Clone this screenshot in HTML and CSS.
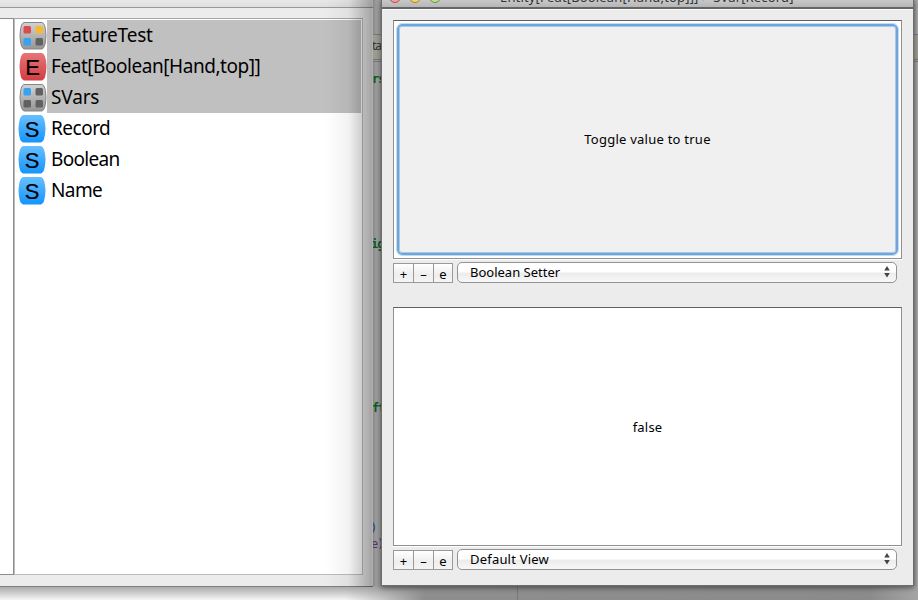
FILE: index.html
```html
<!DOCTYPE html>
<html lang="en">
<head>
<meta charset="utf-8">
<title>Entity Browser</title>
<link rel="stylesheet" href="styles.css">
</head>
<body>
<div class="desktop">
  <div class="editor">
    <span class="code tab">ta</span>
    <span class="code c1">rs</span>
    <span class="code c2">ig</span>
    <span class="code c3">ft</span>
    <span class="code c4">)</span>
    <span class="code c5">e)</span>
  </div>
  <div class="below"></div>
  <section class="window browser">
    <div class="toolbar"></div>
    <div class="panes">
      <div class="side"></div>
      <ul class="list">
        <li class="selected"><svg class="icon" viewBox="0 0 28 29"><use href="#package"/><rect x="4.500" y="5" width="7.500" height="7.500" rx="1.500" fill="#d94b50"/><rect x="16.500" y="5" width="7.500" height="7.500" rx="1.500" fill="#f7b932"/><rect x="4.500" y="17" width="7.500" height="7.500" rx="1.500" fill="#36a2f2"/><rect x="16.500" y="17" width="7.500" height="7.500" rx="1.500" fill="#616161"/></svg><span class="t1">FeatureTest</span></li>
        <li class="selected"><svg class="icon" viewBox="0 0 28 29"><path d="M5 1H23Q27 2 27.500 14.500Q27 28 23 28.500H5Q1 28 .5 14.500Q1 2 5 1Z" fill="url(#red)"/><text x="13.500" y="22.500" class="letter">E</text></svg><span class="t2">Feat[Boolean[Hand,top]]</span></li>
        <li class="selected"><svg class="icon" viewBox="0 0 28 29"><use href="#package"/><rect x="4.500" y="5" width="7.500" height="7.500" rx="1.500" fill="#36a2f2"/><g fill="#616161"><rect x="16.500" y="5" width="7.500" height="7.500" rx="1.500"/><rect x="4.500" y="17" width="7.500" height="7.500" rx="1.500"/><rect x="16.500" y="17" width="7.500" height="7.500" rx="1.500"/></g></svg><span class="t3">SVars</span></li>
        <li><svg class="icon sort" viewBox="0 0 28 29"><use href="#sort"/><text x="14" y="22.500" class="letter">S</text></svg><span class="t4">Record</span></li>
        <li><svg class="icon sort" viewBox="0 0 28 29"><use href="#sort"/><text x="14" y="22.500" class="letter">S</text></svg><span class="t5">Boolean</span></li>
        <li><svg class="icon sort" viewBox="0 0 28 29"><use href="#sort"/><text x="14" y="22.500" class="letter">S</text></svg><span class="t6">Name</span></li>
      </ul>
    </div>
    <div class="shade"></div>
  </section>
  <section class="window inspector">
    <header class="titlebar">
      <i class="light red"></i><i class="light yellow"></i><i class="light green"></i>
      <span class="title">Entity[Feat[Boolean[Hand,top]]] &gt; SVar[Record]</span>
    </header>
    <main class="views">
      <div class="view"><button class="toggle"><span>Toggle value to true</span></button></div>
      <div class="controls">
        <button class="small">+</button><button class="small">–</button><button class="small">e</button>
        <div class="select"><span class="s1">Boolean Setter</span><svg class="arrows" viewBox="0 0 6 12"><path d="M3 0L5.800 4.500H.2ZM3 11.500L.2 7H5.800Z" fill="#444"/></svg></div>
      </div>
      <div class="view second"><span>false</span></div>
      <div class="controls">
        <button class="small">+</button><button class="small">–</button><button class="small">e</button>
        <div class="select"><span class="s2">Default View</span><svg class="arrows" viewBox="0 0 6 12"><path d="M3 0L5.800 4.500H.2ZM3 11.500L.2 7H5.800Z" fill="#444"/></svg></div>
      </div>
    </main>
  </section>
</div>
<svg width="0" height="0" class="defs">
  <defs>
    <linearGradient id="grey" x2="0" y2="1"><stop stop-color="#d2d2d2"/><stop offset="1" stop-color="#969696"/></linearGradient>
    <linearGradient id="red" x2="0" y2="1"><stop stop-color="#e77577"/><stop offset="1" stop-color="#d33d42"/></linearGradient>
    <linearGradient id="blue" x2="0" y2="1"><stop stop-color="#69bfff"/><stop offset="1" stop-color="#1495fc"/></linearGradient>
    <g id="package"><path d="M5 1.500H23Q26.500 2 27 14.500Q26.500 27 23 28H5Q1.500 27 1 14.500Q1.500 2 5 1.500Z" fill="url(#grey)" stroke="#858585"/></g>
    <g id="sort"><path d="M5 1H23Q27 2 27.500 14.500Q27 28 23 28.500H5Q1 28 .5 14.500Q1 2 5 1Z" fill="url(#blue)"/></g>
  </defs>
</svg>
</body>
</html>
```
FILE: styles.css
```css
* { box-sizing: border-box; }
body { margin: 0; font-family: "Noto Sans", "Open Sans", sans-serif; color: #000; }
.defs { position: absolute; }
.desktop { position: relative; width: 918px; height: 600px; overflow: hidden; background: #fff; }

.editor {
  position: absolute; z-index: 0; inset: 0 0 14px 373px;
  background: linear-gradient(90deg, #858585, #9c9c9c 3px, #999 7px, #858585 9px, #8c8c8c 540px, #aaa 545px);
}
.editor::before { content: ""; position: absolute; inset: 34px 0 auto 0; height: 24px; background: #9c9b92; border: solid #777; border-width: 1px 0; }
.editor::after { content: ""; position: absolute; inset: 61px 0 auto 0; height: 1px; background: #777; }
.code { position: absolute; left: 0; z-index: 1; font: bold 12px/14px "DejaVu Sans Mono", monospace; color: #075b22; letter-spacing: -1px; }
.tab { top: 39px; left: -1px; font: 12px/14px "Noto Sans", sans-serif; color: #333; }
.c1 { top: 72px; left: -1px; }
.c2 { top: 237px; left: -2px; }
.c3 { top: 401px; left: -1px; }
.c4 { top: 521px; left: -3px; color: #173a80; font-weight: normal; }
.c5 { top: 537px; left: -2px; color: #563070; font-weight: normal; }
.below {
  position: absolute; left: 0; right: 0; top: 586px; height: 14px;
  background:
    linear-gradient(90deg, transparent 517px, #777 517px, #777 518px, transparent 518px),
    linear-gradient(90deg, transparent 345px, rgba(142,142,142,.35) 375px, #8e8e8e 425px, #8b8b8b 870px, #a4a4a4 918px),
    linear-gradient(#a6a6a6, #f5f5f5);
}

.window { position: absolute; display: flex; flex-direction: column; background: #ececec; }
.browser { z-index: 1; left: 0; top: 0; width: 373px; height: 587px; border-bottom: 1px solid #808080; padding-bottom: 11px; }
.toolbar { height: 8px; flex: none; background: linear-gradient(#e8e8e8, #dedede); border-bottom: 1px solid #999; margin-bottom: 10px; }
.panes { flex: 1; display: flex; width: 363px; }
.side { width: 14px; background: #fff; border: solid #8c8c8c; border-width: 1px 1px 1px 0; }
.list { flex: 1; margin: 0; padding: 1px 1px 0 4px; list-style: none; background: #fff; border: 1px solid #bcbcbc; border-top-color: #a5a5a5; }
.list li { display: flex; height: 31px; font-size: 19px; line-height: 30px; white-space: nowrap; }
.icon { width: 28px; height: 29px; flex: none; margin-top: 1px; }
.sort { margin-left: -1px; margin-right: 1px; }
.list span { flex: 1; padding-left: 4px; }
.t1 { letter-spacing: -.2px; }
.t2 { letter-spacing: -.45px; }
.t3 { letter-spacing: -.15px; }
.t4 { letter-spacing: -.5px; }
.t5 { letter-spacing: -.7px; }
.t6 { letter-spacing: -.6px; }
.selected span { background: #c0c0c0; }
.letter { font: 22px "Liberation Sans", sans-serif; text-anchor: middle; stroke: #000; stroke-width: .2; }
.shade { position: absolute; inset: 0 0 -1px 325px; background: linear-gradient(90deg, transparent, rgba(0,0,0,.05) 50%, rgba(0,0,0,.3)); border-right: 1px solid rgba(0,0,0,.25); }

.inspector { z-index: 2; left: 381px; top: 0; width: 533px; height: 586px; border: solid #fff; border-width: 0 1px 1px; outline: 1px solid #6e6e6e; outline-offset: -1px; background: #ececec; box-shadow: 0 2px 5px rgba(0,0,0,.45); }
.titlebar { position: relative; height: 9px; flex: none; display: flex; gap: 8px; padding-left: 7px; overflow: hidden; background: linear-gradient(#c8c8c8, #b6b6b6); border-bottom: 2px solid #656565; }
.light { width: 12px; height: 12px; margin-top: -9px; border-radius: 50%; border: 1px solid; }
.red { background: #f79c9b; border-color: #aa5552; }
.yellow { background: #f4d569; border-color: #a48430; }
.green { background: #b8df91; border-color: #6a9150; }
.title { margin: -12px 0 0 51px; font-size: 13px; line-height: 18px; letter-spacing: .16px; color: #333; white-space: nowrap; }
.views { flex: 1; padding: 10px 10px 0 11px; border-top: 1px solid #fafafa; }
.view { width: 509px; height: 239px; padding: 2px; background: #fff; border: 1px solid #909090; border-top-color: #606060; display: flex; box-shadow: 0 1px #fff; }
.toggle { flex: 1; padding: 0 0 2px; border: 2px solid #70a5d8; border-radius: 5px; outline: 1px solid #c1dcf2; background: #f0f0f0; box-shadow: inset 0 0 0 1px #a6c9e8; margin: 1px; }
.toggle, .second, .select { font: 13px/18px "Noto Sans", sans-serif; color: #000; }
.toggle span { letter-spacing: .24px; }
.second { align-items: center; justify-content: center; letter-spacing: .2px; }
.controls { display: flex; height: 21px; margin: 3px 0 24px; align-items: stretch; }
.small { width: 21px; height: 20px; margin: 1px -1px 0 0; padding: 1px 0 0; border: 1px solid #999; background: linear-gradient(#fff, #eee 60%, #f5f5f5); font: 13px/16px "Noto Sans", sans-serif; color: #000; }
.small:nth-child(3) { width: 20px; }
.select { width: 440px; height: 21px; margin-left: 5px; padding: 0 6px 1px 12px; display: flex; justify-content: space-between; align-items: center; border: 1px solid #939393; border-radius: 5px; background: linear-gradient(#fff 45%, #ececec 55%, #f8f8f8); }
.s2 { letter-spacing: .2px; }
.arrows { width: 6px; height: 12px; }
```
